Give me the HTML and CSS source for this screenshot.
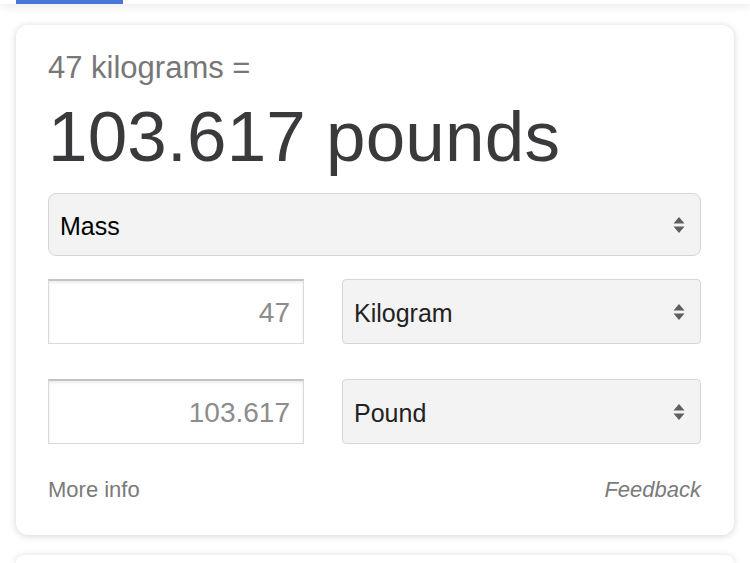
FILE: index.html
```html
<!DOCTYPE html>
<html>
<head>
<meta charset="utf-8">
<link rel="stylesheet" href="styles.css">
</head>
<body>
<div class="topbar"><div class="tab-indicator"></div></div>
<div class="card">
  <div class="query">47 kilograms =</div>
  <div class="result">103.617 pounds</div>
  <div class="select select-wide">
    <span class="select-label label-dark">Mass</span>
    <svg class="arrows" width="12" height="18" viewBox="0 0 12 18"><path d="M6 1 L11.5 7.5 H0.5 Z M6 17 L11.5 10.5 H0.5 Z" fill="#5f5f5f"/></svg>
  </div>
  <div class="row">
    <input class="num" type="text" value="47">
    <div class="select select-unit">
      <span class="select-label">Kilogram</span>
      <svg class="arrows" width="12" height="18" viewBox="0 0 12 18"><path d="M6 1 L11.5 7.5 H0.5 Z M6 17 L11.5 10.5 H0.5 Z" fill="#5f5f5f"/></svg>
    </div>
  </div>
  <div class="row row-second">
    <input class="num" type="text" value="103.617">
    <div class="select select-unit">
      <span class="select-label">Pound</span>
      <svg class="arrows" width="12" height="18" viewBox="0 0 12 18"><path d="M6 1 L11.5 7.5 H0.5 Z M6 17 L11.5 10.5 H0.5 Z" fill="#5f5f5f"/></svg>
    </div>
  </div>
  <div class="footer">
    <span class="more">More info</span>
    <span class="feedback">Feedback</span>
  </div>
</div>
<div class="card card-next"></div>
</body>
</html>
```
FILE: styles.css
```css
html, body {
  margin: 0;
  padding: 0;
  height: 563px;
  background: #ffffff;
  font-family: "Liberation Sans", Arial, sans-serif;
  overflow: hidden;
}
.topbar {
  height: 4px;
  background: #ffffff;
  box-shadow: 0 2px 8px rgba(0,0,0,0.13);
  position: relative;
}
.tab-indicator {
  margin-left: 16px;
  width: 107px;
  height: 4px;
  background: #4a77d6;
}
.card {
  margin: 21px 16px 0 16px;
  background: #fff;
  border-radius: 12px;
  box-shadow: 0 1px 7px rgba(0,0,0,0.18);
  padding: 25px 33px 32px 32px;
}
.card-next {
  margin-top: 20px;
  height: 8px;
  padding: 0;
  border-radius: 12px 12px 0 0;
}
.query {
  font-size: 31px;
  line-height: 36px;
  color: #777777;
}
.result {
  margin-top: 11px;
  font-size: 71px;
  line-height: 80px;
  color: #3a3a3c;
  letter-spacing: 0.2px;
}
.select {
  display: flex;
  align-items: center;
  justify-content: space-between;
  background: #f3f3f3;
  border: 1px solid #d6d6d6;
  box-sizing: border-box;
  padding: 0 15px 0 11px;
}
.select-wide {
  margin-top: 16px;
  height: 63px;
  border-radius: 8px;
}
.select-label {
  font-size: 25px;
  color: #222;
  padding-top: 3px;
}
.label-dark {
  color: #000;
}
.arrows {
  display: block;
}
.row {
  margin-top: 23px;
  display: flex;
  gap: 38px;
  height: 65px;
}
.row-second {
  margin-top: 35px;
}
.num {
  width: 256px;
  height: 65px;
  box-sizing: border-box;
  border: 1px solid #d9d9d9;
  border-top: 2px solid #c4c4c4;
  box-shadow: inset 0 2px 3px rgba(0,0,0,0.08);
  background: #fff;
  font-family: "Liberation Sans", Arial, sans-serif;
  font-size: 28px;
  color: #8c8c8c;
  text-align: right;
  padding: 2px 13px 0 10px;
  margin: 0;
  outline: none;
}
.select-unit {
  flex: 1;
  height: 65px;
  border-radius: 4px;
}
.footer {
  margin-top: 33px;
  display: flex;
  justify-content: space-between;
  font-size: 22px;
  line-height: 26px;
  color: #7a7a7a;
}
.feedback {
  font-style: italic;
}
```
